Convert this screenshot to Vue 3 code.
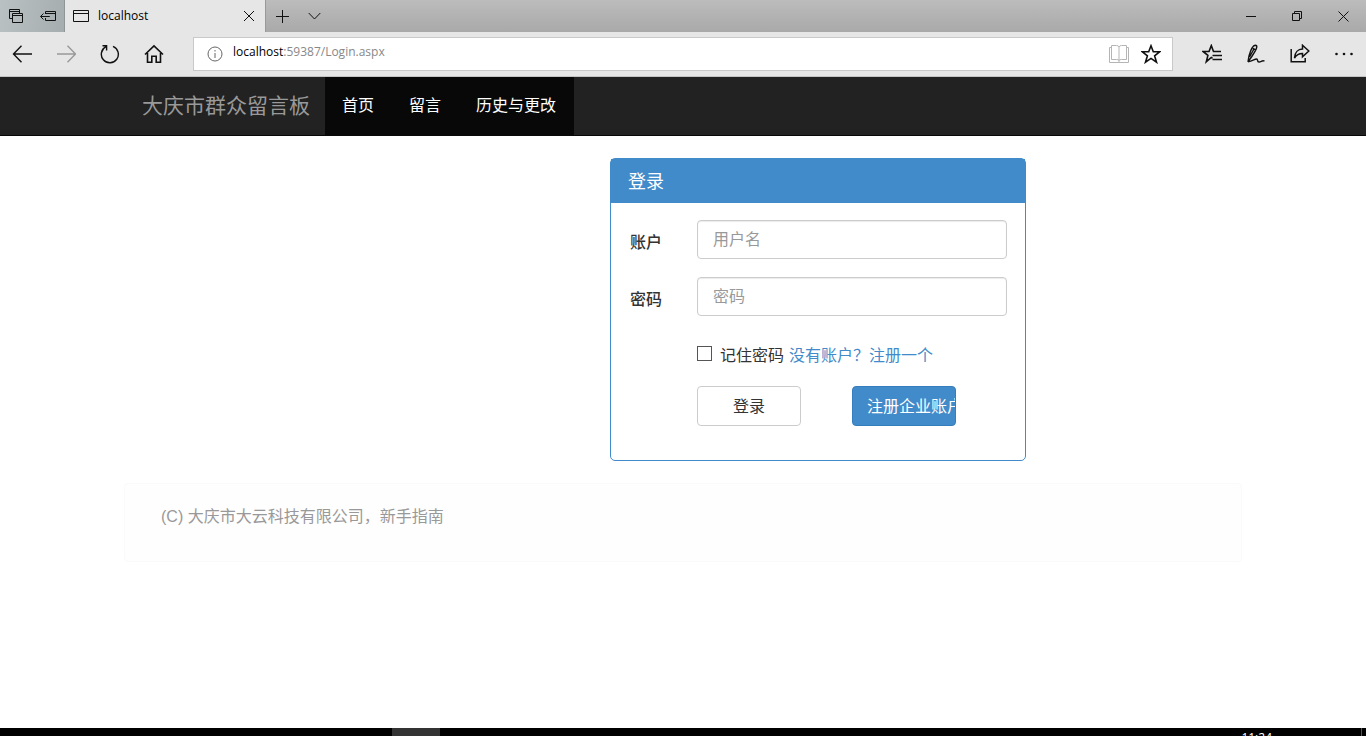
<script setup>
import { ref } from 'vue'

const account = ref('')
const password = ref('')
const remember = ref(false)
const navItems = ['首页', '留言', '历史与更改']
</script>

<template>
  <div class="screen">
    <header class="tabbar">
      <div class="tab-tools">
        <button class="tool" type="button" aria-label="Tabs you've set aside">
          <svg width="16" height="16" viewBox="0 0 16 16"><path d="M4.500 10.500h-3v-9h10v4M1.500 3.500h10M4.500 5.500h10v9h-10zM4.500 7.500h10" /></svg>
        </button>
        <button class="tool" type="button" aria-label="Set these tabs aside">
          <svg width="16" height="16" viewBox="0 0 16 16"><path d="M5.500 6V3.500h10v9h-10V10M5.500 5.500h10M.8 8.500h9M3.500 5.500l-3 3 3 3" /></svg>
        </button>
      </div>
      <div class="tab">
        <svg width="17" height="14" viewBox="0 0 17 14"><path d="M.5 1.500h15v11H.5zM.5 4.500h15" /></svg>
        <span class="tab-title">localhost</span>
        <button class="tab-close" type="button" aria-label="Close tab">
          <svg width="12" height="12" viewBox="0 0 12 12"><path d="M1 1l10 10M11 1L1 11" /></svg>
        </button>
      </div>
      <button class="tool" type="button" aria-label="New tab">
        <svg width="14" height="14" viewBox="0 0 14 14"><path d="M6.500 1v13M0 7.500h13" /></svg>
      </button>
      <button class="tool" type="button" aria-label="Show tab previews">
        <svg width="14" height="8" viewBox="0 0 14 8"><path d="M.7 1L6.500 7l5.800-6" /></svg>
      </button>
      <div class="window-controls">
        <button type="button" aria-label="Minimize"><svg width="10" height="10" viewBox="0 0 10 10"><path d="M0 5.500h10" /></svg></button>
        <button type="button" aria-label="Restore"><svg width="10" height="10" viewBox="0 0 10 10"><path d="M.5 2.500h7v7h-7zM2.500 2.500v-2h7v7h-2" /></svg></button>
        <button type="button" aria-label="Close"><svg width="11" height="11" viewBox="0 0 11 11"><path d="M.5.5l10 10M10.500.5l-10 10" /></svg></button>
      </div>
    </header>

    <div class="toolbar">
      <button class="action" type="button" aria-label="Back">
        <svg class="medium" width="20" height="18" viewBox="0 0 20 18"><path d="M9.500.8L1.500 9l8 8.200M1.500 9H20" /></svg>
      </button>
      <button class="action disabled" type="button" aria-label="Forward" disabled>
        <svg class="medium" width="20" height="18" viewBox="0 0 20 18"><path d="M11.500.8l8 8.200-8 8.200M19.500 9H1" /></svg>
      </button>
      <button class="action" type="button" aria-label="Refresh">
        <svg class="medium" width="20" height="20" viewBox="0 0 20 20"><path d="M6 2.700A8.500 8.500 0 1 0 13 2.400M2.500 1.800h4.100v4.600" /></svg>
      </button>
      <button class="action" type="button" aria-label="Home">
        <svg class="bold" width="20" height="20" viewBox="0 0 20 20"><path d="M1 10.500l9-8.700 9 8.700M3.500 9v9.200h4.300v-6h4.400v6h4.300V9" /></svg>
      </button>
      <div class="address">
        <svg class="info" width="16" height="16" viewBox="0 0 16 16"><circle cx="8" cy="8" r="7" /><path d="M8 7v5M8 4v1.500" /></svg>
        <span class="url"><span class="host">localhost</span>:59387/Login.aspx</span>
        <button class="tool faded" type="button" aria-label="Reading view">
          <svg width="20" height="20" viewBox="0 0 20 20"><path d="M2.500 1.500h5q2 0 2.500 1.500.5-1.500 2.500-1.500h5v14h-5q-2 0-2.500 1-.5-1-2.500-1h-5zM10 3v15M2.500 3.500h-2v15h19v-15h-2" /></svg>
        </button>
        <button class="tool" type="button" aria-label="Add to favorites">
          <svg class="bold" width="20" height="20" viewBox="0 0 20 20"><path d="M10 1.800l2.300 6h6.300l-5 4 1.900 6.400-5.500-3.800-5.500 3.800 1.900-6.400-5-4h6.300z" /></svg>
        </button>
      </div>
      <button class="action" type="button" aria-label="Hub">
        <svg class="bold" width="20" height="20" viewBox="0 0 20 20"><path d="M10.500 14.200L9.300 13.500l-5 4.200 1.600-6.300L1 7.500h6L9.300 1.600l2.200 5.900h7.500M10.500 11.500h9.500M10.500 15.500H20" /></svg>
      </button>
      <button class="action" type="button" aria-label="Add notes">
        <svg class="medium" width="20" height="20" viewBox="0 0 20 20"><path d="M2 17.800L3 12C4.500 6.500 6.500 1.500 9.200 1.200c2.700 0 1.500 3-.2 6.300L5.800 12.500 2 17.800zM6.800 4.500l3 1.500M3.500 12.800L8 5M2 17.800c4.500-.5 6.500-2.800 8.500-2.800s0 3 2.500 3 3-2.200 5.500-.8" /></svg>
      </button>
      <button class="action" type="button" aria-label="Share">
        <svg class="share" width="20" height="20" viewBox="0 0 20 20"><path d="M1.200 5v12.800h14V14M12.500 1.200l6.300 5.800-6.300 5.800V9.500c-3.800 0-6 1.200-8 4.500.3-5.500 3.500-9 8-9z" /></svg>
      </button>
      <button class="action" type="button" aria-label="More">
        <svg class="dots" width="20" height="4" viewBox="0 0 20 4"><circle cx="2.500" cy="2" r="1.300" /><circle cx="10" cy="2" r="1.300" /><circle cx="17.500" cy="2" r="1.300" /></svg>
      </button>
    </div>

    <nav class="navbar">
      <div class="container nav-inner">
        <a class="brand" href="#">大庆市群众留言板</a>
        <ul class="menu">
          <li v-for="item in navItems" :key="item"><a href="#">{{ item }}</a></li>
        </ul>
      </div>
    </nav>

    <main class="container content">
      <section class="panel">
        <h1 class="panel-title">登录</h1>
        <form class="form" @submit.prevent>
          <div class="field">
            <label for="account">账户</label>
            <input id="account" v-model="account" type="text" placeholder="用户名" />
          </div>
          <div class="field">
            <label for="password">密码</label>
            <input id="password" v-model="password" type="password" placeholder="密码" />
          </div>
          <div class="remember">
            <input id="remember" v-model="remember" type="checkbox" />
            <label for="remember">记住密码</label>
            <a href="#">没有账户？注册一个</a>
          </div>
          <div class="buttons">
            <button class="btn" type="submit">登录</button>
            <button class="btn primary" type="button">注册企业账户</button>
          </div>
        </form>
      </section>
      <footer class="footer">(C) 大庆市大云科技有限公司，新手指南</footer>
    </main>

    <div class="taskbar">
      <div class="task"></div>
      <time class="clock">11:24</time>
    </div>
  </div>
</template>

<style>
body {
  margin: 0;
}
</style>

<style scoped>
.screen {
  display: flex;
  flex-direction: column;
  height: 100vh;
  background: #fff;
  color: #333;
  font: 16px/24px "Open Sans", "Noto Sans CJK SC", sans-serif;
}
.screen * {
  box-sizing: border-box;
}
button {
  padding: 0;
  border: 0;
  background: none;
  color: inherit;
  font: inherit;
}
a {
  text-decoration: none;
}
svg {
  display: block;
  flex: none;
  fill: none;
  stroke: #111;
  stroke-width: 1;
}
svg.medium {
  stroke-width: 1.4;
}
svg.share {
  stroke-width: 1.5;
}
svg.bold {
  stroke-width: 1.6;
}
svg.dots {
  fill: #111;
  stroke: none;
}

.tabbar {
  display: flex;
  flex: none;
  height: 32px;
  background: linear-gradient(#bcbcbc, #a9a9a9);
}
.tab-tools {
  display: flex;
  border-right: 1px solid #8f9495;
  background: linear-gradient(100deg, #b9c1c3, #a6adaf);
}
.tool {
  display: flex;
  align-items: center;
  justify-content: center;
  width: 32px;
}
.tab {
  display: flex;
  align-items: center;
  width: 201px;
  margin-right: 1px;
  padding: 0 10px 0 8px;
  border-right: 1px solid #999;
  background: #e6e6e6;
  color: #000;
  font-size: 12px;
}
.tab-title {
  flex: 1;
  margin-left: 8px;
}
.window-controls {
  display: flex;
  margin-left: auto;
}
.window-controls button {
  display: flex;
  align-items: center;
  justify-content: center;
  width: 46px;
}

.toolbar {
  display: flex;
  flex: none;
  align-items: center;
  height: 45px;
  border-bottom: 1px solid #c4c4c4;
  background: #e6e6e6;
}
.action {
  display: flex;
  align-items: center;
  justify-content: center;
  width: 44px;
  height: 44px;
}
.disabled svg {
  stroke: #999;
}
.address {
  display: flex;
  flex: 1;
  height: 34px;
  margin: 0 17px;
  padding: 0 5px 0 13px;
  border: 1px solid #c9c9c9;
  background: #fff;
}
.info {
  align-self: center;
  stroke: #666;
}
.url {
  flex: 1;
  margin-left: 10px;
  color: #888;
  font-size: 12px;
  line-height: 28px;
}
.host {
  color: #000;
}
.faded svg {
  stroke: #b5b5b5;
}

.navbar {
  flex: none;
  border-bottom: 1px solid #080808;
  background: #222;
}
.container {
  width: 100%;
  max-width: 1118px;
  margin: 0 auto;
}
.nav-inner {
  display: flex;
}
.brand {
  padding: 0 15px 2px 18px;
  color: #999;
  font-size: 21px;
  line-height: 56px;
}
.menu {
  display: flex;
  margin: 0;
  padding: 0;
  background: #080808;
  list-style: none;
}
.menu a {
  display: block;
  padding: 0 18px 0 17px;
  color: #fff;
  line-height: 56px;
}

.content {
  flex: 1;
  padding-top: 22px;
}
.panel {
  width: 416px;
  margin-left: 486px;
  border: 1px solid #428bca;
  border-radius: 5px;
}
.panel-title {
  margin: 0;
  padding: 0 17px;
  background: #428bca;
  color: #fff;
  font-size: 18px;
  font-weight: 400;
  line-height: 44px;
}
.form {
  padding: 17px 18px 34px 19px;
}
.field {
  display: flex;
  margin-bottom: 18px;
}
.field label {
  width: 67px;
  height: 39px;
  font-weight: 500;
  line-height: 44px;
}
.field input {
  flex: 1;
  min-width: 0;
  height: 39px;
  padding: 0 15px 2px;
  border: 1px solid #ccc;
  border-radius: 4px;
  background: #fff;
  box-shadow: inset 0 1px 1px rgba(0, 0, 0, 0.08);
  color: #555;
  font: inherit;
}
.field input::placeholder {
  color: #999;
  opacity: 1;
}
.remember {
  display: flex;
  align-items: center;
  margin: 27px 0 19px 67px;
}
.remember input {
  width: 15px;
  height: 15px;
  margin: 0 8px 3px 0;
  border: 1px solid #555;
  background: #fff;
  appearance: none;
}
.remember input:checked {
  background: #428bca;
}
.remember a {
  margin-left: 5px;
  color: #428bca;
}
.buttons {
  display: flex;
  gap: 51px;
  margin-left: 67px;
}
.btn {
  width: 104px;
  height: 40px;
  padding: 0 14px;
  overflow: hidden;
  border: 1px solid #ccc;
  border-radius: 4px;
  background: #fff;
  white-space: nowrap;
}
.btn.primary {
  border-color: #357ebd;
  background: #428bca;
  color: #fff;
  text-align: left;
}
.footer {
  margin-top: 22px;
  padding: 21px 36px 32px;
  border: 1px solid #fafafa;
  border-radius: 4px;
  background: #fefefe;
  color: #999;
  font-family: "Liberation Sans", "Noto Sans CJK SC", sans-serif;
}

.taskbar {
  display: flex;
  flex: none;
  justify-content: space-between;
  height: 8px;
  padding: 0 4px 0 392px;
  overflow: hidden;
  background: #000;
}
.task {
  width: 48px;
  background: #333;
}
.clock {
  height: 24px;
  padding: 0 89px 0 0;
  border-right: 1px solid #555;
  color: #fff;
  font-size: 12px;
  line-height: 20px;
}
</style>
